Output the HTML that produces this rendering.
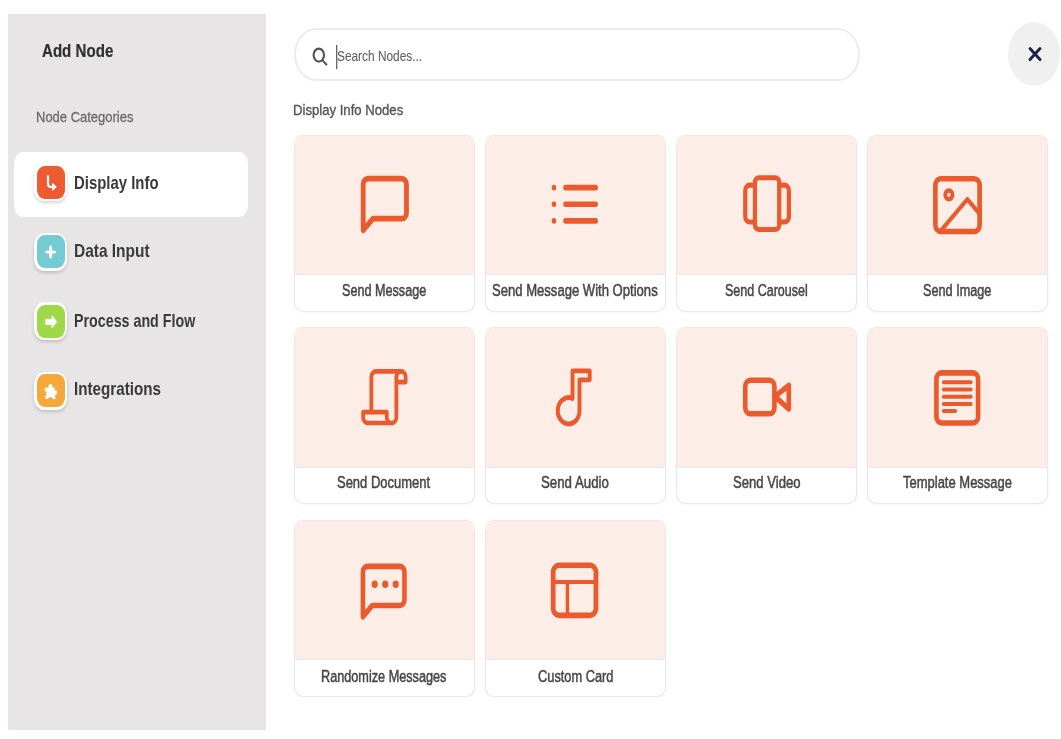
<!DOCTYPE html>
<html><head><meta charset="utf-8"><style>
html,body{margin:0;padding:0}
body{width:1061px;height:739px;overflow:hidden;background:#fff;position:relative;font-family:"Liberation Sans",sans-serif}
.a{position:absolute;box-sizing:border-box}
.t{position:absolute;white-space:nowrap;transform-origin:0 0;line-height:normal}
svg{position:absolute;overflow:visible}
</style></head><body><div style="position:absolute;left:0;top:0;width:1061px;height:739px;filter:blur(0.45px)">

<div class="a" style="left:8px;top:14px;width:258.2px;height:715.5px;background:#e7e5e6;box-shadow:0 0 1px rgba(0,0,0,0.06);"></div>
<div class="t" style="left:41.77px;top:41.16px;font-size:18.17px;font-weight:700;color:#303030;transform:scaleX(0.8315);-webkit-text-stroke:0.2px #303030;">Add Node</div>
<div class="t" style="left:35.71px;top:107.82px;font-size:15.12px;font-weight:400;color:#6a6a6a;transform:scaleX(0.8594);-webkit-text-stroke:0.3px #6a6a6a;">Node Categories</div>
<div class="a" style="left:13.7px;top:152px;width:234.7px;height:64.8px;background:#fff;border-radius:9.5px/11.5px;"></div>
<div class="a" style="left:34.4px;top:163.20px;width:32.6px;height:37.80px;background:#fff;border-radius:10px/12px;box-shadow:0 2px 3.5px rgba(0,0,0,0.17);"></div>
<div class="a" style="left:36.8px;top:165.50px;width:27.8px;height:33.2px;background:#ef5b30;border-radius:7.5px/9px;"></div>
<div class="t" style="left:73.78px;top:172.79px;font-size:18.02px;font-weight:700;color:#3a3a3a;transform:scaleX(0.8283);">Display Info</div>
<div class="a" style="left:34.4px;top:233.00px;width:32.6px;height:37.80px;background:#fff;border-radius:10px/12px;box-shadow:0 2px 3.5px rgba(0,0,0,0.17);"></div>
<div class="a" style="left:36.8px;top:235.30px;width:27.8px;height:33.2px;background:#75cbd2;border-radius:7.5px/9px;"></div>
<div class="t" style="left:73.74px;top:240.79px;font-size:18.02px;font-weight:700;color:#3a3a3a;transform:scaleX(0.8582);">Data Input</div>
<div class="a" style="left:34.4px;top:302.40px;width:32.6px;height:37.80px;background:#fff;border-radius:10px/12px;box-shadow:0 2px 3.5px rgba(0,0,0,0.17);"></div>
<div class="a" style="left:36.8px;top:304.70px;width:27.8px;height:33.2px;background:#9ed94a;border-radius:7.5px/9px;"></div>
<div class="t" style="left:73.82px;top:310.69px;font-size:18.02px;font-weight:700;color:#3a3a3a;transform:scaleX(0.7915);">Process and Flow</div>
<div class="a" style="left:34.4px;top:372.00px;width:32.6px;height:37.80px;background:#fff;border-radius:10px/12px;box-shadow:0 2px 3.5px rgba(0,0,0,0.17);"></div>
<div class="a" style="left:36.8px;top:374.30px;width:27.8px;height:33.2px;background:#f5a93b;border-radius:7.5px/9px;"></div>
<div class="t" style="left:73.76px;top:379.49px;font-size:18.02px;font-weight:700;color:#3a3a3a;transform:scaleX(0.8439);">Integrations</div>
<svg style="left:0;top:0" width="1061" height="739"><path d="M48 176.2 V183.4 Q48 187 51.5 187 H53" fill="none" stroke="#fff" stroke-width="2.2" stroke-linecap="round"/><path d="M52.6 183.6 L56 186.9 L52.6 190 Z" fill="#fff" stroke="#fff" stroke-width="1.2" stroke-linejoin="round"/><path d="M50.7 247 V257.1 M46.7 252.1 H54.7" fill="none" stroke="#fff" stroke-width="2.9" stroke-linecap="round"/><path d="M45.6 319.3 H52 V315.8 L56.8 321.8 L52 327.8 V324.5 H45.6 Z" fill="#fff" stroke="#fff" stroke-width="0.8" stroke-linejoin="round"/><g fill="#fff"><rect x="46.4" y="387.4" width="8.4" height="10.6" rx="1"/><ellipse cx="50.5" cy="386.4" rx="2" ry="2.4"/><ellipse cx="55.3" cy="392.6" rx="1.9" ry="2.4"/><ellipse cx="46" cy="389.6" rx="1.4" ry="2.1"/><ellipse cx="46.6" cy="397.2" rx="1.5" ry="1.9"/><ellipse cx="54" cy="397.4" rx="1.5" ry="1.9"/></g><ellipse cx="50.3" cy="399" rx="1.5" ry="2" fill="#f5a93b"/></svg>
<div class="a" style="left:294px;top:28px;width:565.5px;height:52.6px;border:2px solid #ececec;border-radius:22px/26.3px;background:#fff;"></div>
<svg style="left:0;top:0" width="1061" height="739"><ellipse cx="318.8" cy="55.1" rx="5.2" ry="6.5" fill="none" stroke="#555" stroke-width="2.1"/><path d="M322.8 60.6 L326.4 64.5" stroke="#555" stroke-width="2.1" stroke-linecap="round"/><rect x="336" y="45" width="1.3" height="24.2" fill="#666"/></svg>
<div class="t" style="left:336.72px;top:46.73px;font-size:15.55px;font-weight:400;color:#606060;transform:scaleX(0.7632);-webkit-text-stroke:0.1px #606060;">Search Nodes...</div>
<div class="a" style="left:1008px;top:22px;width:52px;height:64px;background:#f1f0f1;border-radius:50%;"></div>
<svg style="left:0;top:0" width="1061" height="739"><path d="M1030 48.6 L1040 59.6 M1040 48.6 L1030 59.6" stroke="#1b2340" stroke-width="2.9" stroke-linecap="round"/></svg>
<div class="t" style="left:292.50px;top:101.81px;font-size:14.68px;font-weight:400;color:#555;transform:scaleX(0.8951);-webkit-text-stroke:0.35px #555;">Display Info Nodes</div>
<div class="a" style="left:293.5px;top:135.2px;width:181px;height:176.60px;border:1.5px solid #eae9ea;border-radius:9px/10.5px;background:#fff;overflow:hidden;box-shadow:0 0 2.5px rgba(0,0,0,0.07);"><div class="a" style="left:0;top:0;right:0;height:138.60px;background:#fcede7;border-bottom:1.5px solid #ede8e7;"></div></div>
<svg style="left:356.00px;top:169.75px" width="57.7" height="68.8" viewBox="0 0 24 24" preserveAspectRatio="none" fill="none" stroke="#ea5a2c" stroke-width="2" stroke-linecap="round" stroke-linejoin="round"><path d="M21 15a2 2 0 0 1-2 2H7l-4 4V5a2 2 0 0 1 2-2h14a2 2 0 0 1 2 2z"/></svg>
<div class="t" style="left:342.13px;top:280.60px;font-size:16.13px;font-weight:400;color:#474747;transform:scaleX(0.7837);-webkit-text-stroke:0.5px #474747;">Send Message</div>
<div class="a" style="left:484.6px;top:135.2px;width:181px;height:176.60px;border:1.5px solid #eae9ea;border-radius:9px/10.5px;background:#fff;overflow:hidden;box-shadow:0 0 2.5px rgba(0,0,0,0.07);"><div class="a" style="left:0;top:0;right:0;height:138.60px;background:#fcede7;border-bottom:1.5px solid #ede8e7;"></div></div>
<svg style="left:547.10px;top:171.45px" width="55.6" height="66.5" viewBox="0 0 24 24" preserveAspectRatio="none" fill="none" stroke="#ea5a2c" stroke-width="2" stroke-linecap="round" stroke-linejoin="round"><path d="M8 6h13M8 12h13M8 18h13M3 6h.01M3 12h.01M3 18h.01"/></svg>
<div class="t" style="left:492.36px;top:280.60px;font-size:16.13px;font-weight:400;color:#474747;transform:scaleX(0.8115);-webkit-text-stroke:0.5px #474747;">Send Message With Options</div>
<div class="a" style="left:675.7px;top:135.2px;width:181px;height:176.60px;border:1.5px solid #eae9ea;border-radius:9px/10.5px;background:#fff;overflow:hidden;box-shadow:0 0 2.5px rgba(0,0,0,0.07);"><div class="a" style="left:0;top:0;right:0;height:138.60px;background:#fcede7;border-bottom:1.5px solid #ede8e7;"></div></div>
<svg style="left:737.60px;top:169.00px" width="58.2" height="69.2" viewBox="0 0 24 24" preserveAspectRatio="none" fill="none" stroke="#ea5a2c" stroke-width="1.75" stroke-linecap="round" stroke-linejoin="round"><rect x="7" y="3" width="10" height="18" rx="1.6"/><path d="M7 5.6H4.8a1.8 1.8 0 0 0-1.8 1.8v9.2a1.8 1.8 0 0 0 1.8 1.8H7M17 5.6h2.2a1.8 1.8 0 0 1 1.8 1.8v9.2a1.8 1.8 0 0 1-1.8 1.8H17"/></svg>
<div class="t" style="left:725.19px;top:280.60px;font-size:16.13px;font-weight:400;color:#474747;transform:scaleX(0.7766);-webkit-text-stroke:0.5px #474747;">Send Carousel</div>
<div class="a" style="left:866.8px;top:135.2px;width:181px;height:176.60px;border:1.5px solid #eae9ea;border-radius:9px/10.5px;background:#fff;overflow:hidden;box-shadow:0 0 2.5px rgba(0,0,0,0.07);"><div class="a" style="left:0;top:0;right:0;height:138.60px;background:#fcede7;border-bottom:1.5px solid #ede8e7;"></div></div>
<svg style="left:928.45px;top:169.55px" width="59.0" height="70.2" viewBox="0 0 24 24" preserveAspectRatio="none" fill="none" stroke="#ea5a2c" stroke-width="1.9" stroke-linecap="round" stroke-linejoin="round"><rect x="3" y="3" width="18" height="18" rx="2.2"/><g stroke-width="1.55"><circle cx="8.5" cy="8.5" r="1.5"/><path d="M21 15l-5-5L5 21"/></g></svg>
<div class="t" style="left:923.38px;top:280.60px;font-size:16.13px;font-weight:400;color:#474747;transform:scaleX(0.7871);-webkit-text-stroke:0.5px #474747;">Send Image</div>
<div class="a" style="left:293.5px;top:326.5px;width:181px;height:177.50px;border:1.5px solid #eae9ea;border-radius:9px/10.5px;background:#fff;overflow:hidden;box-shadow:0 0 2.5px rgba(0,0,0,0.07);"><div class="a" style="left:0;top:0;right:0;height:140.80px;background:#fcede7;border-bottom:1.5px solid #ede8e7;"></div></div>
<svg style="left:356.50px;top:362.90px" width="55.6" height="67.4" viewBox="0 0 24 24" preserveAspectRatio="none" fill="none" stroke="#ea5a2c" stroke-width="1.65" stroke-linecap="round" stroke-linejoin="round"><path d="M6.2 17.5V5a2 2 0 0 1 2-2H19"/><path d="M15 21.35H4.65a2 2 0 0 1-2-2v-1.85h10.2v1.85a2.07 2.07 0 0 0 4.14 0V5a2 2 0 0 1 4 0v1.8h-4"/></svg>
<div class="t" style="left:337.47px;top:473.00px;font-size:16.13px;font-weight:400;color:#474747;transform:scaleX(0.8052);-webkit-text-stroke:0.5px #474747;">Send Document</div>
<div class="a" style="left:484.6px;top:326.5px;width:181px;height:177.50px;border:1.5px solid #eae9ea;border-radius:9px/10.5px;background:#fff;overflow:hidden;box-shadow:0 0 2.5px rgba(0,0,0,0.07);"><div class="a" style="left:0;top:0;right:0;height:140.80px;background:#fcede7;border-bottom:1.5px solid #ede8e7;"></div></div>
<svg style="left:547.50px;top:362.90px" width="55.6" height="67.4" viewBox="0 0 24 24" preserveAspectRatio="none" fill="none" stroke="#ea5a2c" stroke-width="1.7" stroke-linecap="round" stroke-linejoin="round"><path d="M10.6 12.62V2.8H18V6H13.6V17A4.7 4.7 0 1 1 10.6 12.62Z"/></svg>
<div class="t" style="left:541.40px;top:473.00px;font-size:16.13px;font-weight:400;color:#474747;transform:scaleX(0.8231);-webkit-text-stroke:0.5px #474747;">Send Audio</div>
<div class="a" style="left:675.7px;top:326.5px;width:181px;height:177.50px;border:1.5px solid #eae9ea;border-radius:9px/10.5px;background:#fff;overflow:hidden;box-shadow:0 0 2.5px rgba(0,0,0,0.07);"><div class="a" style="left:0;top:0;right:0;height:140.80px;background:#fcede7;border-bottom:1.5px solid #ede8e7;"></div></div>
<svg style="left:738.50px;top:363.10px" width="55.6" height="67.0" viewBox="0 0 24 24" preserveAspectRatio="none" fill="none" stroke="#ea5a2c" stroke-width="2" stroke-linecap="round" stroke-linejoin="round"><rect x="2.7" y="6.2" width="12.6" height="12" rx="2.2"/><path d="M15.5 12L21.5 8V16.5Z"/></svg>
<div class="t" style="left:732.66px;top:473.00px;font-size:16.13px;font-weight:400;color:#474747;transform:scaleX(0.8138);-webkit-text-stroke:0.5px #474747;">Send Video</div>
<div class="a" style="left:866.8px;top:326.5px;width:181px;height:177.50px;border:1.5px solid #eae9ea;border-radius:9px/10.5px;background:#fff;overflow:hidden;box-shadow:0 0 2.5px rgba(0,0,0,0.07);"><div class="a" style="left:0;top:0;right:0;height:140.80px;background:#fcede7;border-bottom:1.5px solid #ede8e7;"></div></div>
<svg style="left:929.20px;top:363.55px" width="55.6" height="66.7" viewBox="0 0 24 24" preserveAspectRatio="none" fill="none" stroke="#ea5a2c" stroke-width="2" stroke-linecap="round" stroke-linejoin="round"><rect x="3.2" y="3.2" width="18" height="18" rx="2.2"/><g stroke-width="1.45"><path d="M6.3 6.6H18.1M6.3 9.2H18.1M6.3 11.8H18.1M6.3 14.4H18.1M6.3 16.9H11.4"/></g></svg>
<div class="t" style="left:903.19px;top:473.00px;font-size:16.13px;font-weight:400;color:#474747;transform:scaleX(0.8063);-webkit-text-stroke:0.5px #474747;">Template Message</div>
<div class="a" style="left:293.5px;top:520.3px;width:181px;height:177.00px;border:1.5px solid #eae9ea;border-radius:9px/10.5px;background:#fff;overflow:hidden;box-shadow:0 0 2.5px rgba(0,0,0,0.07);"><div class="a" style="left:0;top:0;right:0;height:138.70px;background:#fcede7;border-bottom:1.5px solid #ede8e7;"></div></div>
<svg style="left:356.20px;top:558.15px" width="55.4" height="67.1" viewBox="0 0 24 24" preserveAspectRatio="none" fill="none" stroke="#ea5a2c" stroke-width="2" stroke-linecap="round" stroke-linejoin="round"><path d="M21 15a2 2 0 0 1-2 2H7l-4 4V5a2 2 0 0 1 2-2h14a2 2 0 0 1 2 2z"/><g fill="#ea5a2c" stroke="none"><ellipse cx="8.1" cy="9.4" rx="1.35" ry="1.35"/><ellipse cx="12.65" cy="9.4" rx="1.35" ry="1.35"/><ellipse cx="17.2" cy="9.4" rx="1.35" ry="1.35"/></g></svg>
<div class="t" style="left:321.18px;top:666.70px;font-size:16.13px;font-weight:400;color:#474747;transform:scaleX(0.7871);-webkit-text-stroke:0.5px #474747;">Randomize Messages</div>
<div class="a" style="left:484.6px;top:520.3px;width:181px;height:177.00px;border:1.5px solid #eae9ea;border-radius:9px/10.5px;background:#fff;overflow:hidden;box-shadow:0 0 2.5px rgba(0,0,0,0.07);"><div class="a" style="left:0;top:0;right:0;height:138.70px;background:#fcede7;border-bottom:1.5px solid #ede8e7;"></div></div>
<svg style="left:546.49px;top:557.35px" width="57.1" height="66.7" viewBox="0 0 24 24" preserveAspectRatio="none" fill="none" stroke="#ea5a2c" stroke-width="2" stroke-linecap="round" stroke-linejoin="round"><rect x="3" y="3" width="18" height="18" rx="2.5"/><g stroke-width="1.45"><path d="M3 9h18M9 21V9"/></g></svg>
<div class="t" style="left:537.71px;top:666.70px;font-size:16.13px;font-weight:400;color:#474747;transform:scaleX(0.7953);-webkit-text-stroke:0.5px #474747;">Custom Card</div>
</div></body></html>
